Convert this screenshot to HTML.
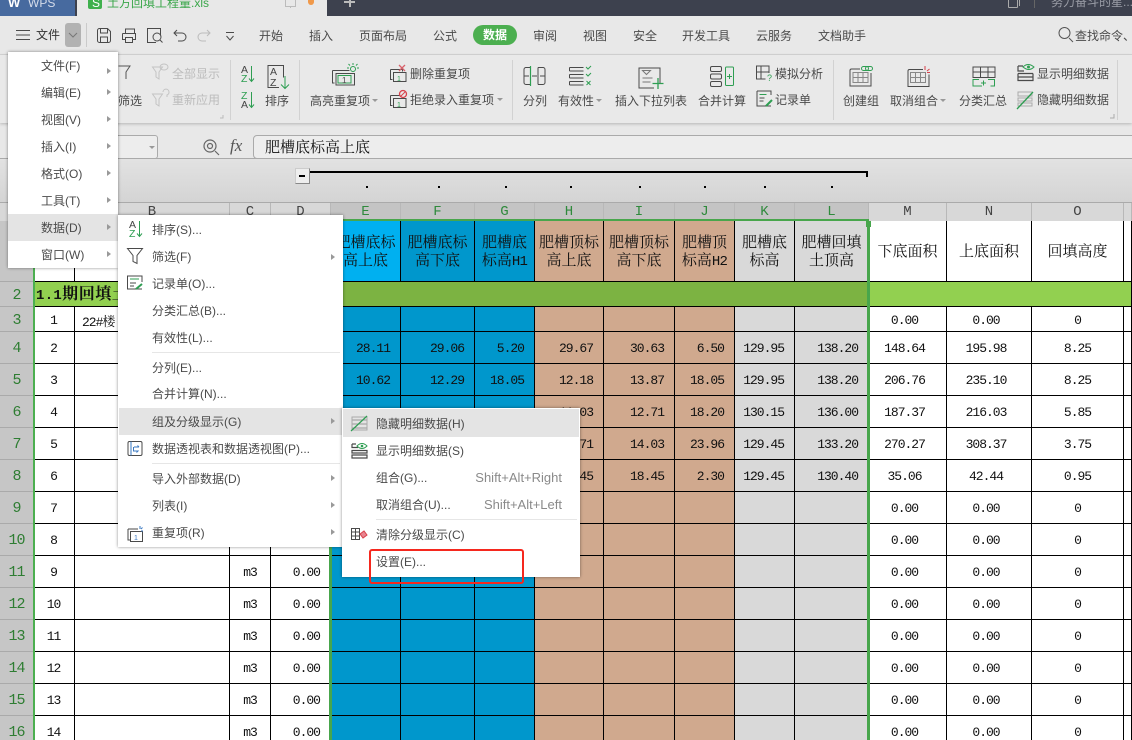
<!DOCTYPE html>
<html lang="zh"><head><meta charset="utf-8"><title>WPS</title>
<style>
html,body{margin:0;padding:0;width:1132px;height:740px;overflow:hidden}
body{background:#fff;font-family:"Liberation Sans","Noto Sans CJK SC",sans-serif;font-size:12px;color:#444}
#p{position:relative;width:1132px;height:740px;overflow:hidden}
.a{position:absolute}
.t{position:absolute;white-space:nowrap;line-height:16px;font-size:12px;color:#4a4a4a}
.dis{color:#bcbcbc}
table{position:absolute;left:0;top:202px;border-collapse:separate;border-spacing:0;table-layout:fixed;width:1132px;font-family:"Liberation Mono","Noto Serif CJK SC",monospace;font-size:13px;color:#111;letter-spacing:-1px}
td{border-right:1px solid #000;border-bottom:1px solid #000;padding:2px 0 0;overflow:hidden;white-space:nowrap;box-sizing:border-box;text-align:center}
.ch td{background:#d8d8d8;color:#444;border-right:1px solid #b8b8b8;border-bottom:0;font-size:14px;height:19px;line-height:18px;letter-spacing:0;vertical-align:top;padding-top:1px}
.ch td.s{background:#c4c4c4;color:#2f8a3c}
td.rh{background:#c6c6c6;color:#2e7d32;border-right:0;border-bottom:1px solid #aaa;font-size:15px;letter-spacing:-1px}
td.bl{background:#0097cc}
td.br{background:#d0a98e}
td.gr{background:#d9d9d9}
td.r{text-align:right;padding-right:10px}
td.hd{font-family:"Liberation Mono","Noto Serif CJK SC",serif;font-size:15px;line-height:18px;letter-spacing:0;color:#111;padding-top:4px}
td.hd span{font-size:14px;letter-spacing:-.8px}
td.m{padding-right:6px}
.menu{position:absolute;background:#fff;box-shadow:0 0 3px rgba(0,0,0,.45)}
.hl{position:absolute;background:#e4e4e4}
.ar{position:absolute;width:0;height:0;border-left:4px solid #999;border-top:3.5px solid transparent;border-bottom:3.5px solid transparent}
.sep{position:absolute;height:1px;background:#e6e6e6}
.tr{position:absolute;width:0;height:0;border-top:3px solid #999;border-left:3px solid transparent;border-right:3px solid transparent}
svg{position:absolute;left:0;top:0;overflow:visible}
svg text{font-family:"Liberation Sans",sans-serif}
</style></head><body><div id="p">

<!-- spreadsheet grid -->
<table>
<colgroup><col style="width:33px"><col style="width:42px"><col style="width:155px"><col style="width:41px"><col style="width:60px"><col style="width:70px"><col style="width:74px"><col style="width:60px"><col style="width:69px"><col style="width:71px"><col style="width:60px"><col style="width:60px"><col style="width:74px"><col style="width:78px"><col style="width:85px"><col style="width:92px"><col style="width:8px"></colgroup>
<tr class="ch"><td></td><td>A</td><td>B</td><td>C</td><td>D</td><td class="s">E</td><td class="s">F</td><td class="s">G</td><td class="s">H</td><td class="s">I</td><td class="s">J</td><td class="s">K</td><td class="s">L</td><td>M</td><td>N</td><td>O</td><td></td></tr>
<tr style="height:61px"><td class="rh">1</td><td></td><td></td><td></td><td></td><td class="hd" style="background:#00b0f0">肥槽底标<br>高上底</td><td class="hd bl">肥槽底标<br>高下底</td><td class="hd bl">肥槽底<br>标高<span>H1</span></td><td class="hd br">肥槽顶标<br>高上底</td><td class="hd br">肥槽顶标<br>高下底</td><td class="hd br">肥槽顶<br>标高<span>H2</span></td><td class="hd gr">肥槽底<br>标高</td><td class="hd gr">肥槽回填<br>土顶高</td><td class="hd">下底面积</td><td class="hd">上底面积</td><td class="hd">回填高度</td><td></td></tr>
<tr style="height:25px"><td class="rh" style="padding-top:3px;line-height:18px">2</td><td colspan="4" style="background:#92d050;text-align:left;padding-left:3px;font-weight:bold;font-size:16px;line-height:18px;letter-spacing:.6px;font-family:'Liberation Mono','Noto Serif CJK SC',monospace"><span style="font-size:14px;letter-spacing:.3px">1.1</span>期回填土方量</td><td colspan="8" style="background:#7cb342"></td><td colspan="4" style="background:#92d050"></td></tr>
<tr style="height:25px"><td class="rh">3</td><td>1</td><td style="text-align:left;padding-left:7px">22#楼</td><td></td><td></td><td class="bl"></td><td class="bl"></td><td class="bl"></td><td class="br"></td><td class="br"></td><td class="br"></td><td class="gr"></td><td class="gr"></td><td class="m">0.00</td><td class="m">0.00</td><td>0</td><td></td></tr>
<tr style="height:32px"><td class="rh">4</td><td>2</td><td></td><td></td><td></td><td class="bl r">28.11</td><td class="bl r">29.06</td><td class="bl r">5.20</td><td class="br r">29.67</td><td class="br r">30.63</td><td class="br r">6.50</td><td class="gr r">129.95</td><td class="gr r">138.20</td><td class="m">148.64</td><td class="m">195.98</td><td>8.25</td><td></td></tr>
<tr style="height:32px"><td class="rh">5</td><td>3</td><td></td><td></td><td></td><td class="bl r">10.62</td><td class="bl r">12.29</td><td class="bl r">18.05</td><td class="br r">12.18</td><td class="br r">13.87</td><td class="br r">18.05</td><td class="gr r">129.95</td><td class="gr r">138.20</td><td class="m">206.76</td><td class="m">235.10</td><td>8.25</td><td></td></tr>
<tr style="height:32px"><td class="rh">6</td><td>4</td><td></td><td></td><td></td><td class="bl"></td><td class="bl"></td><td class="bl"></td><td class="br r">11.03</td><td class="br r">12.71</td><td class="br r">18.20</td><td class="gr r">130.15</td><td class="gr r">136.00</td><td class="m">187.37</td><td class="m">216.03</td><td>5.85</td><td></td></tr>
<tr style="height:32px"><td class="rh">7</td><td>5</td><td></td><td></td><td></td><td class="bl"></td><td class="bl"></td><td class="bl"></td><td class="br r">12.71</td><td class="br r">14.03</td><td class="br r">23.96</td><td class="gr r">129.45</td><td class="gr r">133.20</td><td class="m">270.27</td><td class="m">308.37</td><td>3.75</td><td></td></tr>
<tr style="height:32px"><td class="rh">8</td><td>6</td><td></td><td></td><td></td><td class="bl"></td><td class="bl"></td><td class="bl"></td><td class="br r">17.45</td><td class="br r">18.45</td><td class="br r">2.30</td><td class="gr r">129.45</td><td class="gr r">130.40</td><td class="m">35.06</td><td class="m">42.44</td><td>0.95</td><td></td></tr>
<tr style="height:32px"><td class="rh">9</td><td>7</td><td></td><td></td><td></td><td class="bl"></td><td class="bl"></td><td class="bl"></td><td class="br"></td><td class="br"></td><td class="br"></td><td class="gr"></td><td class="gr"></td><td class="m">0.00</td><td class="m">0.00</td><td>0</td><td></td></tr>
<tr style="height:32px"><td class="rh">10</td><td>8</td><td></td><td></td><td></td><td class="bl"></td><td class="bl"></td><td class="bl"></td><td class="br"></td><td class="br"></td><td class="br"></td><td class="gr"></td><td class="gr"></td><td class="m">0.00</td><td class="m">0.00</td><td>0</td><td></td></tr>
<tr style="height:32px"><td class="rh">11</td><td>9</td><td></td><td>m3</td><td class="r">0.00</td><td class="bl"></td><td class="bl"></td><td class="bl"></td><td class="br"></td><td class="br"></td><td class="br"></td><td class="gr"></td><td class="gr"></td><td class="m">0.00</td><td class="m">0.00</td><td>0</td><td></td></tr>
<tr style="height:32px"><td class="rh">12</td><td>10</td><td></td><td>m3</td><td class="r">0.00</td><td class="bl"></td><td class="bl"></td><td class="bl"></td><td class="br"></td><td class="br"></td><td class="br"></td><td class="gr"></td><td class="gr"></td><td class="m">0.00</td><td class="m">0.00</td><td>0</td><td></td></tr>
<tr style="height:32px"><td class="rh">13</td><td>11</td><td></td><td>m3</td><td class="r">0.00</td><td class="bl"></td><td class="bl"></td><td class="bl"></td><td class="br"></td><td class="br"></td><td class="br"></td><td class="gr"></td><td class="gr"></td><td class="m">0.00</td><td class="m">0.00</td><td>0</td><td></td></tr>
<tr style="height:32px"><td class="rh">14</td><td>12</td><td></td><td>m3</td><td class="r">0.00</td><td class="bl"></td><td class="bl"></td><td class="bl"></td><td class="br"></td><td class="br"></td><td class="br"></td><td class="gr"></td><td class="gr"></td><td class="m">0.00</td><td class="m">0.00</td><td>0</td><td></td></tr>
<tr style="height:32px"><td class="rh">15</td><td>13</td><td></td><td>m3</td><td class="r">0.00</td><td class="bl"></td><td class="bl"></td><td class="bl"></td><td class="br"></td><td class="br"></td><td class="br"></td><td class="gr"></td><td class="gr"></td><td class="m">0.00</td><td class="m">0.00</td><td>0</td><td></td></tr>
<tr style="height:32px"><td class="rh">16</td><td>14</td><td></td><td>m3</td><td class="r">0.00</td><td class="bl"></td><td class="bl"></td><td class="bl"></td><td class="br"></td><td class="br"></td><td class="br"></td><td class="gr"></td><td class="gr"></td><td class="m">0.00</td><td class="m">0.00</td><td>0</td><td></td></tr>
</table>

<!-- selection lines -->
<div class="a" style="left:33px;top:221px;width:2px;height:519px;background:#4caf50"></div>
<div class="a" style="left:329px;top:221px;width:3px;height:519px;background:#48a64c"></div>
<div class="a" style="left:867px;top:221px;width:3px;height:519px;background:#48a64c"></div>
<div class="a" style="left:331px;top:219px;width:538px;height:2px;background:#48a64c"></div>
<div class="a" style="left:866px;top:221px;width:5px;height:6px;background:#48a64c"></div>

<!-- outline / formula area -->
<div class="a" style="left:0;top:159px;width:1132px;height:43px;background:linear-gradient(#e2e2e2,#d4d4d4);border-bottom:1px solid #aaa;box-sizing:content-box"></div>
<div class="a" style="left:0;top:123px;width:1132px;height:35px;background:#e8e8e8;border-bottom:1px solid #aaa"></div>
<div class="a" style="left:60px;top:135px;width:96px;height:22px;border:1px solid #aaa;border-radius:3px;background:#ededed"></div>
<div class="tr" style="left:149px;top:146px"></div>
<div class="a" style="left:253px;top:135px;width:900px;height:22px;border:1px solid #aaa;border-radius:4px;background:#ededed"></div>
<div class="t" style="left:265px;top:140px;font-size:15px;color:#111;font-family:'Liberation Sans','Noto Serif CJK SC',serif">肥槽底标高上底</div>
<div class="t" style="left:230px;top:138px;font-family:'Liberation Serif',serif;font-style:italic;font-size:17px;color:#555">fx</div>

<!-- outline bar -->
<div class="a" style="left:295px;top:168px;width:13px;height:14px;background:#eee;border:1px solid #999;border-color:#ccc #888 #888 #ccc"></div>
<div class="a" style="left:299px;top:175px;width:6px;height:2px;background:#000"></div>
<div class="a" style="left:310px;top:171px;width:558px;height:2px;background:#000"></div>
<div class="a" style="left:866px;top:171px;width:2px;height:6px;background:#000"></div>
<div class="a" style="left:366px;top:186px;width:2px;height:2px;background:#000"></div>
<div class="a" style="left:438px;top:186px;width:2px;height:2px;background:#000"></div>
<div class="a" style="left:505px;top:186px;width:2px;height:2px;background:#000"></div>
<div class="a" style="left:570px;top:186px;width:2px;height:2px;background:#000"></div>
<div class="a" style="left:639px;top:186px;width:2px;height:2px;background:#000"></div>
<div class="a" style="left:704px;top:186px;width:2px;height:2px;background:#000"></div>
<div class="a" style="left:764px;top:186px;width:2px;height:2px;background:#000"></div>
<div class="a" style="left:831px;top:186px;width:2px;height:2px;background:#000"></div>

<!-- top bar -->
<div class="a" style="left:0;top:0;width:1132px;height:16px;background:#3d414e"></div>
<div class="a" style="left:0;top:0;width:75px;height:16px;background:#476a9f"></div>
<div class="a" style="left:77px;top:0;width:250px;height:16px;background:#e8e8e8"></div>
<div class="a" style="left:88px;top:-4px;width:14px;height:13px;background:#3fb04d;border-radius:2px"></div>
<div class="t" style="left:28px;top:-5px;color:#d5dcea">WPS</div>
<div class="t" style="left:8px;top:-5px;color:#fff;font-weight:bold;font-size:13px">W</div>
<div class="t" style="left:107px;top:-5px;color:#3aa64a">土方回填工程量.xls</div>
<div class="t" style="left:92px;top:-5px;color:#fff">S</div>
<div class="a" style="left:285px;top:-2px;width:9px;height:7px;border:1px solid #bbb"></div>
<div class="a" style="left:290px;top:6px;width:1px;height:2px;background:#bbb"></div>
<div class="a" style="left:308px;top:0;width:6px;height:5px;background:#f0994a;border-radius:0 0 3px 3px"></div>
<div class="a" style="left:344px;top:1px;width:11px;height:2px;background:#bbb"></div>
<div class="a" style="left:349px;top:0;width:2px;height:7px;background:#bbb"></div>
<div class="a" style="left:1008px;top:-3px;width:8px;height:9px;border:1px solid #aaa;border-radius:1px"></div>
<div class="a" style="left:1019px;top:0;width:1px;height:6px;background:#aaa"></div>
<div class="a" style="left:1034px;top:0;width:1px;height:8px;background:#666"></div>
<div class="t" style="left:1051px;top:-6px;color:#9a9da6">努力奋斗的星...</div>

<!-- menu bar -->
<div class="a" style="left:0;top:16px;width:1132px;height:38px;background:#e8e8e8;border-bottom:1px solid #d6d6d6"></div>
<div class="a" style="left:0;top:55px;width:1132px;height:68px;background:#e9e9e9;box-shadow:0 1px 3px rgba(0,0,0,.22)"></div>
<div class="a" style="left:65px;top:23px;width:16px;height:24px;background:#b2b2b2;border-radius:3px"></div>
<div class="a" style="left:86px;top:23px;width:1px;height:24px;background:#cacaca"></div>
<div class="a" style="left:473px;top:25px;width:44px;height:20px;background:#4caf50;border-radius:10px"></div>
<div class="t" style="left:36px;top:27px;color:#333">文件</div>
<div class="t" style="left:259px;top:28px">开始</div>
<div class="t" style="left:309px;top:28px">插入</div>
<div class="t" style="left:359px;top:28px">页面布局</div>
<div class="t" style="left:433px;top:28px">公式</div>
<div class="t" style="left:483px;top:27px;color:#fff;font-weight:bold">数据</div>
<div class="t" style="left:533px;top:28px">审阅</div>
<div class="t" style="left:583px;top:28px">视图</div>
<div class="t" style="left:633px;top:28px">安全</div>
<div class="t" style="left:682px;top:28px">开发工具</div>
<div class="t" style="left:756px;top:28px">云服务</div>
<div class="t" style="left:818px;top:28px">文档助手</div>
<div class="t" style="left:1075px;top:28px">查找命令、</div>

<!-- ribbon dividers -->
<div class="a" style="left:230px;top:60px;width:1px;height:60px;background:#d2d2d2"></div>
<div class="a" style="left:299px;top:60px;width:1px;height:60px;background:#d2d2d2"></div>
<div class="a" style="left:512px;top:60px;width:1px;height:60px;background:#d2d2d2"></div>
<div class="a" style="left:833px;top:60px;width:1px;height:60px;background:#d2d2d2"></div>
<div class="a" style="left:1117px;top:60px;width:1px;height:60px;background:#d2d2d2"></div>

<!-- ribbon labels -->
<div class="t" style="left:118px;top:93px">筛选</div>
<div class="t dis" style="left:172px;top:66px">全部显示</div>
<div class="t dis" style="left:172px;top:92px">重新应用</div>
<div class="t" style="left:265px;top:93px">排序</div>
<div class="t" style="left:310px;top:93px">高亮重复项</div><div class="tr" style="left:372px;top:99px"></div>
<div class="t" style="left:410px;top:66px">删除重复项</div>
<div class="t" style="left:410px;top:92px">拒绝录入重复项</div><div class="tr" style="left:497px;top:98px"></div>
<div class="t" style="left:523px;top:93px">分列</div>
<div class="t" style="left:558px;top:93px">有效性</div><div class="tr" style="left:596px;top:99px"></div>
<div class="t" style="left:615px;top:93px">插入下拉列表</div>
<div class="t" style="left:698px;top:93px">合并计算</div>
<div class="t" style="left:775px;top:66px">模拟分析</div>
<div class="t" style="left:775px;top:92px">记录单</div>
<div class="t" style="left:843px;top:93px">创建组</div>
<div class="t" style="left:890px;top:93px">取消组合</div><div class="tr" style="left:940px;top:99px"></div>
<div class="t" style="left:959px;top:93px">分类汇总</div>
<div class="t" style="left:1037px;top:66px">显示明细数据</div>
<div class="t" style="left:1037px;top:92px">隐藏明细数据</div>

<!-- toolbar + ribbon icons -->
<svg width="1132" height="740" viewBox="0 0 1132 740" fill="none" stroke="#4a4a4a" stroke-width="1">
<path d="M16 30.500H30M16 35H30M16 39.500H30"/>
<path d="M69 33l4 4 4-4" stroke="#777"/>
<path d="M97.500 30.500a2 2 0 0 1 2-2h8l3 3v9a2 2 0 0 1-2 2h-9a2 2 0 0 1-2-2zM100.500 29v4h7v-4M100.500 42v-5h7v5"/>
<path d="M125.500 33v-4h9v4M122.500 33.500h13v6h-3M125.500 39.500h-3v-6M125.500 37.500h7v5h-7z"/>
<path d="M156 42.500h-8.500v-14h13v7M153 37a4 4 0 1 0 8 0a4 4 0 1 0-8 0M160 40l2.500 2.500"/>
<path d="M177 30l-3 3 3 3M174 33h8a3.500 3.500 0 0 1 0 8h-4"/>
<path d="M207 30l3 3-3 3M210 33h-8a3.500 3.500 0 0 0 0 8h4" stroke="#bbb"/>
<path d="M226 32.500h8M226.500 36l3.500 4 3.500-4"/>
<path d="M1073 42l-4-4M1070 33a5.500 5.500 0 1 1-11 0a5.500 5.500 0 1 1 11 0" stroke="#555"/>
<path d="M204 146a6 6 0 1 1 12 0a6 6 0 1 1-12 0M215 151l4 4M207.500 146a2.500 2.500 0 1 1 5 0a2.500 2.500 0 1 1-5 0" stroke="#666" stroke-width="1.200"/>

<path d="M118.500 66h11.500l-4 6v7" stroke="#555"/>
<path d="M152.500 67h10l-3.500 5v7l-3-2v-5zM160 67a4 3 0 1 0 8 0a4 3 0 1 0-8 0" stroke="#c4c4c4"/>
<path d="M152.500 94h10l-3.500 5v7l-3-2v-5zM163 92a3 3 0 1 1 4 3v2" stroke="#c4c4c4"/>

<!-- sort icons -->
<text x="241" y="73" font-size="10.500" fill="#444" stroke="none">A</text>
<text x="241" y="82" font-size="10.500" fill="#2e9e52" stroke="none">Z</text>
<path d="M251.500 66v15M249 78.500l2.500 3 2.500-3" stroke="#2e9e52"/>
<text x="241" y="99" font-size="10.500" fill="#2e9e52" stroke="none">Z</text>
<text x="241" y="108" font-size="10.500" fill="#444" stroke="none">A</text>
<path d="M251.500 92v15M249 104.500l2.500 3 2.500-3" stroke="#2e9e52"/>
<path d="M279 87.500h-11v-22h15.500v12"/>
<text x="270" y="75" font-size="10.500" fill="#444" stroke="none">A</text>
<text x="270" y="86" font-size="10.500" fill="#444" stroke="none">Z</text>
<path d="M285 76v12M281 84.500l4 4 4-4" stroke="#2e9e52"/>

<!-- highlight dup -->
<path d="M332.500 70.500h17M332.500 70.500v12.500h2M336 73.500h18.500v11.500h-18.500z"/>
<path d="M338 75.500h13v7.500h-13z" stroke="#2e9e52"/>
<text x="342" y="83" font-size="8" fill="#444" stroke="none">1</text>
<path d="M350.500 69a2.500 2.500 0 1 1 5 0a2.500 2.500 0 1 1-5 0M353 63v2M347 68h2M357 68h2M348.500 64l1.500 1.500M357.500 64l-1.500 1.500" stroke="#2e9e52"/>

<!-- remove dup -->
<path d="M390.500 69.500h12v2M390.500 69.500v10h2M393.500 72.500h12.500v9h-12.500z"/>
<text x="397" y="81" font-size="7" fill="#2e9e52" stroke="none">1</text>
<path d="M399 65l6 6M405 65l-6 6" stroke="#d8616b" stroke-width="1.300"/>
<path d="M390.500 95.500h9M390.500 95.500v10h2M393.500 98.500h12.500v9h-12.500z"/>
<text x="397" y="107" font-size="7" fill="#2e9e52" stroke="none">1</text>
<circle cx="403" cy="94" r="3.500" stroke="#d8414b" stroke-width="1.300"/><path d="M400.500 96.500l5-5" stroke="#d8414b"/>

<!-- split col -->
<path d="M530 67.500h-4a2 2 0 0 0-2 2v13a2 2 0 0 0 2 2h4M538 67.500h5a2 2 0 0 1 2 2v13a2 2 0 0 1-2 2h-5M524 76h5M532 76h5M540 76h5M538 67.500v17"/>
<path d="M530.500 66v20" stroke="#2e9e52" stroke-width="1.200"/>

<!-- validity -->
<path d="M569.500 67.500h14M569.500 71h14M569.500 67.500v3.500M569.500 74.500h14M569.500 78h14M569.500 74.500v3.500M569.500 81.500h14M569.500 85h14M569.500 81.500v3.500"/>
<path d="M586 67l2 2 3-3M586 74l2 2 3-3" stroke="#2e9e52"/><path d="M586.500 81l4 4M590.500 81l-4 4" stroke="#2e9e52"/>

<!-- dropdown list -->
<path d="M660 83v-15h-21v20h15"/><path d="M642.500 70.500h8l-4 4zM642.500 78h10M642.500 82h8" stroke="#777"/>
<path d="M658 78v11M652.500 83.500h11" stroke="#2e9e52" stroke-width="1.300"/>

<!-- merge calc -->
<rect x="710.500" y="66.500" width="11" height="5" rx="1.500"/><rect x="710.500" y="74" width="11" height="5" rx="1.500"/><rect x="710.500" y="81.500" width="11" height="5" rx="1.500"/>
<rect x="725.500" y="67" width="8" height="18.500" rx="1" stroke="#2e9e52"/><path d="M727 76.500h5M729.500 74v5" stroke="#2e9e52"/>

<!-- what if -->
<path d="M769 73v-7h-12.500v13h9M761 66v13M756.500 72h12"/><text x="767" y="81" font-size="9" fill="#2e9e52" stroke="none">?</text>
<!-- record -->
<path d="M757 91h14v4M757 91v15h9"/><path d="M759.500 94.500h7" stroke="#2e9e52"/><path d="M759.500 98h5M759.500 101h4M757 106h14"/><path d="M766 106l6-6" stroke="#2e9e52" stroke-width="2"/>

<!-- create group -->
<path d="M860 69h-8.500a1.500 1.500 0 0 0-1.500 1.500v15.500h21v-13"/>
<path d="M853 72.500h15v10h-15zM853 77.500h15M858 72.500v10M863 72.500v10" stroke="#888"/>
<rect x="861.500" y="66.500" width="7" height="4" rx="2" stroke="#2e9e52"/><rect x="865.500" y="66.500" width="7" height="4" rx="2" stroke="#2e9e52"/>
<!-- ungroup -->
<path d="M923 69.500h-13.500a1.500 1.500 0 0 0-1.500 1.500v15.500h21v-12"/>
<path d="M910.500 72.500h15v10h-15zM910.500 77.500h15M915.500 72.500v10M920.500 72.500v10" stroke="#888"/>
<path d="M925 66v4M927 71l2.500-2M927 72.500h3" stroke="#d8414b"/>
<!-- subtotal -->
<path d="M973 67h22v10.500h-22zM973 72h22M980.500 67v10.500M988 67v10.500"/>
<path d="M982 86h-9v-6.500h6M988 79.500h6.500v6.500h-4M981 83h5M983.500 80.500v5" stroke="#2e9e52"/>
<!-- show detail -->
<path d="M1018 66h5M1018 66v5h6M1018 73.500h15M1018 73.500v3.500h15M1018 77v3.500h15v-3.500M1033 73.500v3.500" stroke-width="1.200"/>
<path d="M1023 67q5-5 11 0q-5 5-11 0z" stroke="#2e9e52"/><circle cx="1028.500" cy="67" r="1.500" fill="#2e9e52" stroke="none"/>
<!-- hide detail -->
<path d="M1018 92h14v4h-14zM1018 98h14v3h-14zM1018 103h14v3h-14z" stroke="#aaa"/>
<path d="M1017 109l16-17" stroke="#2e9e52" stroke-width="1.300"/>
<path d="M1110 118h4v-4" stroke="#aaa"/>
<path d="M220 118h3v-3" stroke="#bbb"/>
</svg>

<!-- submenu 1 -->
<div class="menu" style="left:8px;top:52px;width:110px;height:216px"></div>
<div class="hl" style="left:8px;top:214px;width:110px;height:27px"></div>
<div class="t" style="left:41px;top:58px">文件(F)</div><div class="ar" style="left:107px;top:68px"></div>
<div class="t" style="left:41px;top:85px">编辑(E)</div><div class="ar" style="left:107px;top:89px"></div>
<div class="t" style="left:41px;top:112px">视图(V)</div><div class="ar" style="left:107px;top:116px"></div>
<div class="t" style="left:41px;top:139px">插入(I)</div><div class="ar" style="left:107px;top:143px"></div>
<div class="t" style="left:41px;top:166px">格式(O)</div><div class="ar" style="left:107px;top:170px"></div>
<div class="t" style="left:41px;top:193px">工具(T)</div><div class="ar" style="left:107px;top:197px"></div>
<div class="t" style="left:41px;top:220px">数据(D)</div><div class="ar" style="left:107px;top:224px"></div>
<div class="t" style="left:41px;top:247px">窗口(W)</div><div class="ar" style="left:107px;top:251px"></div>

<!-- submenu 2 -->
<div class="menu" style="left:118px;top:215px;width:225px;height:332px"></div>
<div class="hl" style="left:119px;top:408px;width:224px;height:27px"></div>
<div class="sep" style="left:152px;top:352px;width:188px"></div>
<div class="sep" style="left:152px;top:463px;width:188px"></div>
<div class="t" style="left:152px;top:222px">排序(S)...</div>
<div class="t" style="left:152px;top:249px">筛选(F)</div><div class="ar" style="left:331px;top:254px"></div>
<div class="t" style="left:152px;top:276px">记录单(O)...</div>
<div class="t" style="left:152px;top:303px">分类汇总(B)...</div>
<div class="t" style="left:152px;top:330px">有效性(L)...</div>
<div class="t" style="left:152px;top:360px">分列(E)...</div>
<div class="t" style="left:152px;top:386px">合并计算(N)...</div>
<div class="t" style="left:152px;top:414px">组及分级显示(G)</div><div class="ar" style="left:331px;top:418px"></div>
<div class="t" style="left:152px;top:441px">数据透视表和数据透视图(P)...</div>
<div class="t" style="left:152px;top:471px">导入外部数据(D)</div><div class="ar" style="left:331px;top:475px"></div>
<div class="t" style="left:152px;top:498px">列表(I)</div><div class="ar" style="left:331px;top:502px"></div>
<div class="t" style="left:152px;top:525px">重复项(R)</div><div class="ar" style="left:331px;top:529px"></div>

<!-- submenu 3 -->
<div class="menu" style="left:342px;top:408px;width:238px;height:169px"></div>
<div class="hl" style="left:343px;top:409px;width:236px;height:28px"></div>
<div class="sep" style="left:376px;top:519px;width:201px"></div>
<div class="t" style="left:376px;top:416px">隐藏明细数据(H)</div>
<div class="t" style="left:376px;top:443px">显示明细数据(S)</div>
<div class="t" style="left:376px;top:470px">组合(G)...</div>
<div class="t" style="left:376px;top:497px">取消组合(U)...</div>
<div class="t" style="left:376px;top:527px">清除分级显示(C)</div>
<div class="t" style="left:376px;top:554px">设置(E)...</div>
<div class="t" style="right:570px;top:470px;color:#8a8a8a;font-size:13px">Shift+Alt+Right</div>
<div class="t" style="right:570px;top:497px;color:#8a8a8a;font-size:13px">Shift+Alt+Left</div>
<div class="a" style="left:369px;top:549px;width:151px;height:31px;border:2.500px solid #f5281e;border-radius:3px"></div>

<!-- menu icons -->
<svg width="1132" height="740" viewBox="0 0 1132 740" fill="none" stroke="#4a4a4a" stroke-width="1">
<text x="129" y="228" font-size="10.500" fill="#444" stroke="none">A</text>
<text x="129" y="237" font-size="10.500" fill="#2e9e52" stroke="none">Z</text>
<path d="M139.500 221v15M137 233.500l2.500 3 2.500-3" stroke="#2e9e52"/>
<path d="M127.500 248.500h15l-5.500 7v8l-4-2v-6z"/>
<path d="M142 282v-6h-14.500v13h5M142 289h-9.500"/><path d="M130 279h9" stroke="#2e9e52"/><path d="M130 283h6M130 286h4"/><path d="M136 289l6-5" stroke="#2e9e52" stroke-width="2"/>
<rect x="128" y="441.500" width="14" height="14" rx="1.500"/><path d="M134 447h5M139 447l-1.500-1.500M133 451h5l-1.500 1.500M133.500 447v4" stroke="#3a78c2"/><path d="M131 441.500v14" stroke="#3a78c2"/>
<path d="M128 529h10M128 529v11h2M130.500 531.500h12v10h-12z"/><text x="134" y="540" font-size="7" fill="#3a78c2" stroke="none">1</text><path d="M140 529v-3M143 531h-2M142.500 527.500l-1.500 1.500" stroke="#3a78c2"/>
<!-- sub3 -->
<path d="M352 420h15M352 424h15M352 428h15" stroke="#999"/><rect x="352" y="417" width="15" height="13" stroke="#aaa"/><path d="M351 431l16-15" stroke="#2e9e52" stroke-width="1.200"/>
<path d="M352 444h4M352 444v3.500h6M352 450.500h15v2.500h-15zM352 455h15v3h-15z" stroke-width="1.200"/>
<path d="M357 446q5-5 10 0q-5 5-10 0z" stroke="#2e9e52"/><circle cx="362" cy="446" r="1.300" fill="#2e9e52" stroke="none"/>
<path d="M351.500 528.500h8v11h-8zM355.500 528.500v11M351.500 532h8M351.500 536h8"/>
<path d="M360 534l4-3 3 4-4 3z" fill="#e88590" stroke="#d8414b"/>
</svg>

</div></body></html>
